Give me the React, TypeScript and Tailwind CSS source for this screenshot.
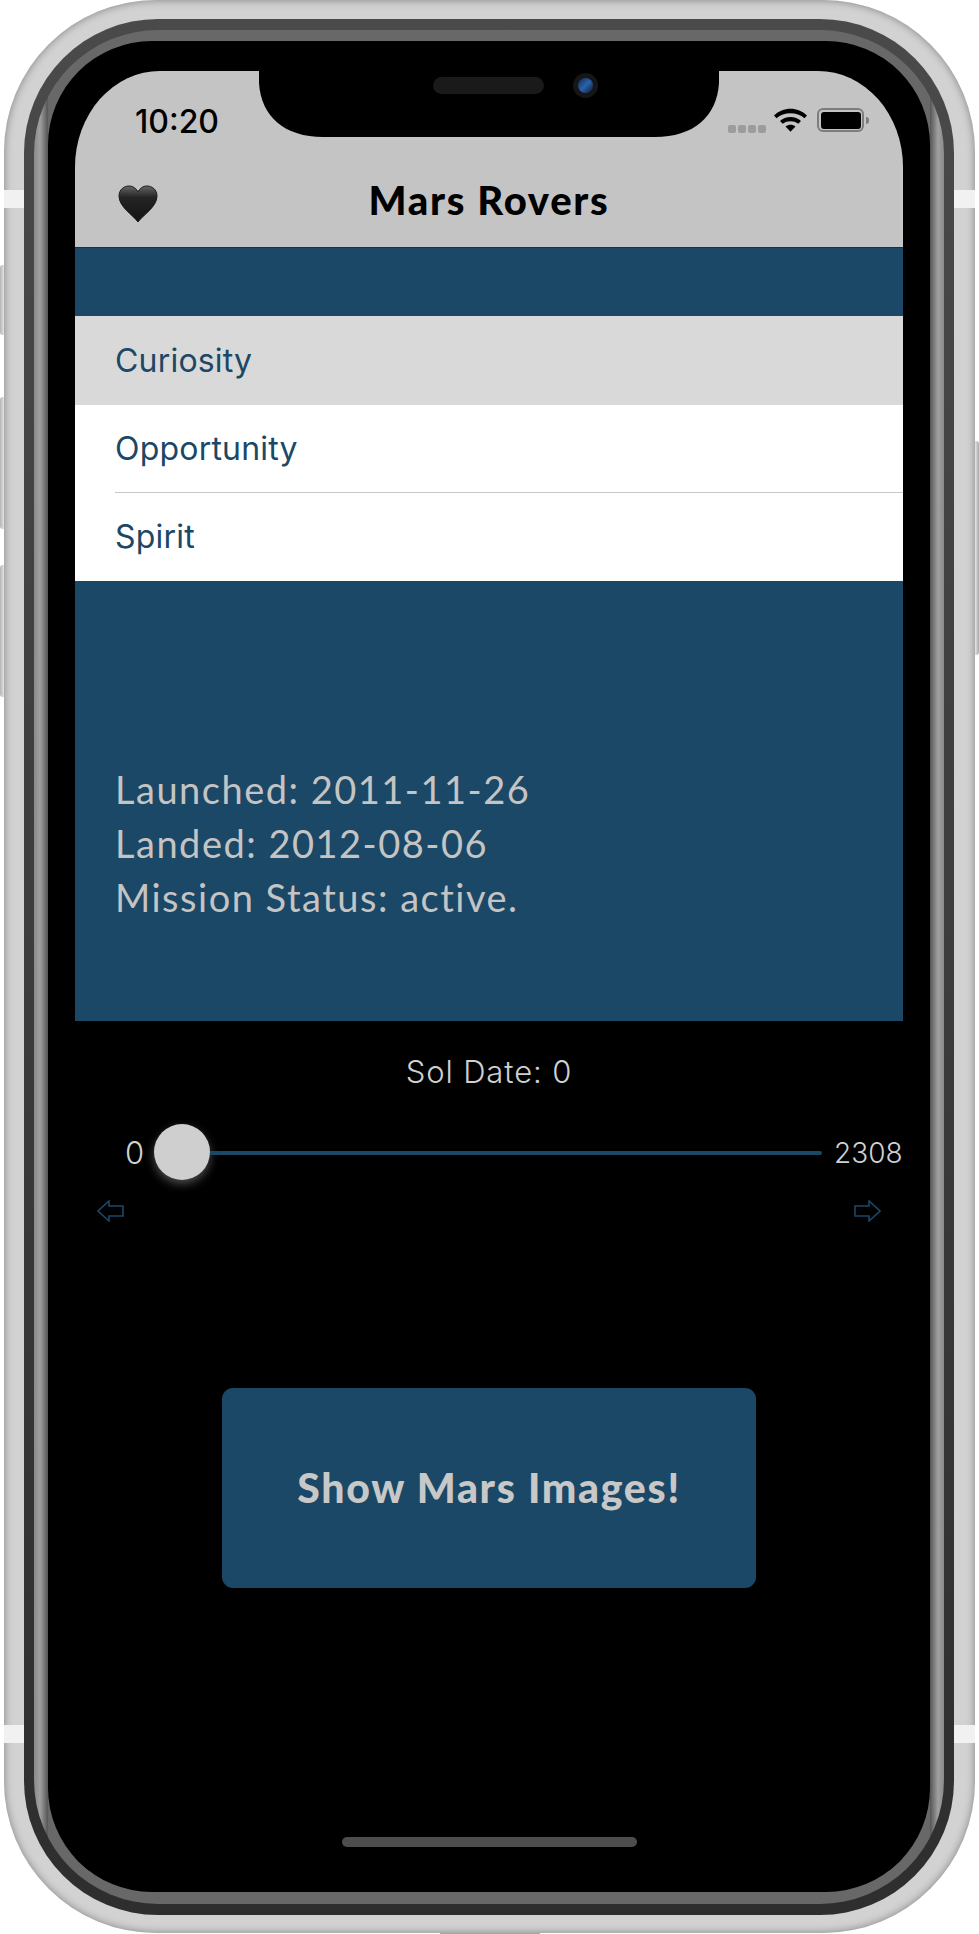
const Heart = () => (
  <svg width="40" height="38" viewBox="0 0 40 38">
    <defs>
      <linearGradient id="heartFill" x1="0" y1="0" x2="0" y2="1">
        <stop offset="0" stopColor="#6a6a6a" />
        <stop offset="0.12" stopColor="#4c4c4c" />
        <stop offset="0.32" stopColor="#242424" />
        <stop offset="1" stopColor="#141414" />
      </linearGradient>
    </defs>
    <path d="M20 37 C15 30 1 22 1 11 C1 4.500 6 1 11 1 C15 1 18.500 3.500 20 7 C21.500 3.500 25 1 29 1 C34 1 39 4.500 39 11 C39 22 25 30 20 37 Z" fill="url(#heartFill)" stroke="#1c1c1c" strokeWidth="1" />
  </svg>
);

const Wifi = () => (
  <svg width="33" height="24" viewBox="0 0 33 24">
    <path d="M0 7.500 C9 -1.500 24 -1.500 33 7.500 L30.500 10.300 C23 3.500 10 3.500 2.500 10.300 Z" fill="#000" />
    <path d="M6 13 C11.500 7.800 21.500 7.800 27 13 L24.300 15.800 C20 12.500 13 12.500 8.700 15.800 Z" fill="#000" />
    <path d="M11.500 18.500 C14.500 16 18.500 16 21.500 18.500 L16.500 23.800 Z" fill="#000" />
  </svg>
);

const Arrow = ({ right }: { right?: boolean }) => (
  <svg width="27" height="22" viewBox="0 0 27 22" className={right ? "" : "-scale-x-100"}>
    <path d="M1 6 H15 V1 L26 11 L15 21 V16 H1 Z" fill="none" stroke="#1b4866" strokeWidth="1.6" />
  </svg>
);

const rovers = ["Curiosity", "Opportunity", "Spirit"];

const App = () => {
  return (
    <div className="relative h-[1934px] w-[979px] overflow-hidden bg-white font-['Lato',sans-serif]">
      {/* side buttons */}
      <div className="absolute left-0 top-[265px] h-[70px] w-2 rounded-l-[3px] bg-gradient-to-r from-[#b4b4b4] via-[#e4e4e8] to-[#b8b8b8]" />
      <div className="absolute left-0 top-[397px] h-[132px] w-2 rounded-l-[3px] bg-gradient-to-r from-[#b4b4b4] via-[#e4e4e8] to-[#b8b8b8]" />
      <div className="absolute left-0 top-[565px] h-[132px] w-2 rounded-l-[3px] bg-gradient-to-r from-[#b4b4b4] via-[#e4e4e8] to-[#b8b8b8]" />
      <div className="absolute right-0 top-[441px] h-[214px] w-2 rounded-r-[3px] bg-gradient-to-l from-[#a8a8a8] via-[#e8e8ec] to-[#b8b8b8]" />
      <div className="absolute bottom-0 left-[440px] h-1 w-[100px] rounded-t bg-[#a8a8a8]" />

      {/* silver band */}
      <div className="absolute bottom-px left-1 right-1 top-0 rounded-[152px] bg-[#d2d2d2] pb-[18px] pl-5 pr-[21px] pt-[19px] shadow-[inset_0_0_9px_#808080]">
        <div className="h-full rounded-[134px] bg-gradient-to-b from-[#4a4a4a] to-[#2e2e2e] p-[10px] pb-[11px] pt-[11px]">
          <div className="h-full rounded-[124px] bg-[linear-gradient(to_right,#8a8a8a_0,#a0a0a0_6px,#555555_14px,#686868_14px,#686868_calc(100%-14px),#555555_calc(100%-14px),#a0a0a0_calc(100%-6px),#8a8a8a_100%)] p-[14px] pb-3 pt-[11px]">
            <div className="flex h-full flex-col overflow-hidden rounded-[104px] bg-black pb-[21px] pl-[27px] pr-[27px] pt-[30px]">
              <div className="flex h-full flex-col overflow-hidden rounded-tl-[85px_96px] rounded-tr-[85px_96px]">
                {/* status and nav bar */}
                <div className="relative h-[176px] shrink-0 bg-[#c4c4c4]">
                  <svg className="absolute left-[184px] top-0" width="460" height="66" viewBox="0 0 460 66">
                    <path d="M0 0 C0 0 0 0 0 12 C2 46 26 66 64 66 H396 C434 66 458 46 460 12 V0 Z" fill="#000" />
                  </svg>
                  <div className="absolute left-[358px] top-[6px] h-[17px] w-[111px] rounded-full bg-[#1a1a1a]" />
                  <div className="absolute left-[498px] top-[2px] h-[25px] w-[25px] rounded-full bg-[#161616] p-[5px]">
                    <div className="h-full w-full rounded-full bg-gradient-to-br from-[#0d2a55] via-[#2c62a8] to-[#0c1e3e]" />
                  </div>
                  <span className="absolute left-[60px] top-[32px] font-['Inter',sans-serif] text-[32px] font-medium leading-[38px] text-black">10:20</span>
                  <div className="absolute left-[653px] top-[54px] flex gap-[2px]">
                    <div className="h-[8px] w-[8px] rounded-[2px] bg-[#9c9c9c]" />
                    <div className="h-[8px] w-[8px] rounded-[2px] bg-[#9c9c9c]" />
                    <div className="h-[8px] w-[8px] rounded-[2px] bg-[#9c9c9c]" />
                    <div className="h-[8px] w-[8px] rounded-[2px] bg-[#9c9c9c]" />
                  </div>
                  <div className="absolute left-[699px] top-[37px]">
                    <Wifi />
                  </div>
                  <div className="absolute left-[742px] top-[37px] h-[24px] w-[47px] rounded-[6px] border-2 border-[#7d7d7d] p-[1.5px]">
                    <div className="h-full w-full rounded-[3px] bg-black" />
                  </div>
                  <div className="absolute left-[791px] top-[46px] h-[7px] w-[3px] rounded-r-sm bg-[#7d7d7d]" />
                  <div className="absolute left-[43px] top-[114px]">
                    <Heart />
                  </div>
                  <div className="absolute inset-x-0 top-[105px] text-center text-[40px] font-black leading-[48px] tracking-[1.7px] text-black">Mars Rovers</div>
                </div>

                <div className="h-[69px] shrink-0 border-t border-[#12344b] bg-[#1b4866]" />

                {/* rover list */}
                <div className="shrink-0">
                  {rovers.map((rover, i) => (
                    <div key={rover} className={i === 0 ? "bg-[#d9d9d9]" : "bg-white"}>
                      <div className={`ml-[40px] flex items-center font-['Inter',sans-serif] text-[32px] tracking-[0.2px] text-[#1b4866] ${i === 0 ? "h-[89px]" : "h-[88px]"} ${i === 1 ? "border-b border-[#c8c8c8]" : ""}`}>
                        {rover}
                      </div>
                    </div>
                  ))}
                </div>

                {/* mission details */}
                <div className="flex h-[440px] shrink-0 flex-col justify-end bg-[#1b4866] pb-[97px] pl-[40px] text-[38px] font-normal leading-[54px] tracking-[1.5px] text-[#c4c4c4]">
                  <p>Launched: 2011-11-26</p>
                  <p>Landed: 2012-08-06</p>
                  <p>Mission Status: active.</p>
                </div>

                <div className="flex flex-1 flex-col bg-black">
                  <p className="mt-[32px] text-center font-['Inter',sans-serif] text-[31px] font-light leading-[38px] tracking-[0.9px] text-[#d0d0d0]">Sol Date: 0</p>
                  <div className="mt-[33px] flex h-[56px] items-center">
                    <span className="ml-[50px] mt-[2px] w-[29px] font-['Inter',sans-serif] text-[31px] font-light text-[#d0d0d0]">0</span>
                    <div className="h-[56px] w-[56px] shrink-0 rounded-full bg-[#cfcfcf] shadow-[0_4px_10px_rgba(255,255,255,0.3)]" />
                    <div className="mt-[2px] h-1 w-[612px] rounded-r bg-[#1b4866]" />
                    <span className="ml-3 mt-[2px] font-['Inter',sans-serif] text-[28px] font-light text-[#d0d0d0]">2308</span>
                  </div>
                  <div className="mt-[20px] flex justify-between pl-[22px] pr-[22px]">
                    <Arrow />
                    <Arrow right />
                  </div>
                  <button className="mx-auto mt-[166px] flex h-[200px] w-[534px] items-center justify-center rounded-[11px] bg-[#1b4866] text-[41px] font-black tracking-[1.7px] text-[#c8c8c8]">
                    Show Mars Images!
                  </button>
                  <div className="mx-auto mt-[249px] h-[10px] w-[295px] rounded-[5px] bg-[#4d4d4d]" />
                </div>
              </div>
            </div>
          </div>
        </div>
      </div>

      {/* antenna bands */}
      <div className="absolute left-1 top-[190px] h-[18px] w-5 bg-[#f1f1f1]" />
      <div className="absolute right-1 top-[190px] h-[18px] w-[21px] bg-[#f1f1f1]" />
      <div className="absolute left-1 top-[1725px] h-[18px] w-5 bg-[#f1f1f1]" />
      <div className="absolute right-1 top-[1725px] h-[18px] w-[21px] bg-[#f1f1f1]" />
    </div>
  );
};

export default App;
